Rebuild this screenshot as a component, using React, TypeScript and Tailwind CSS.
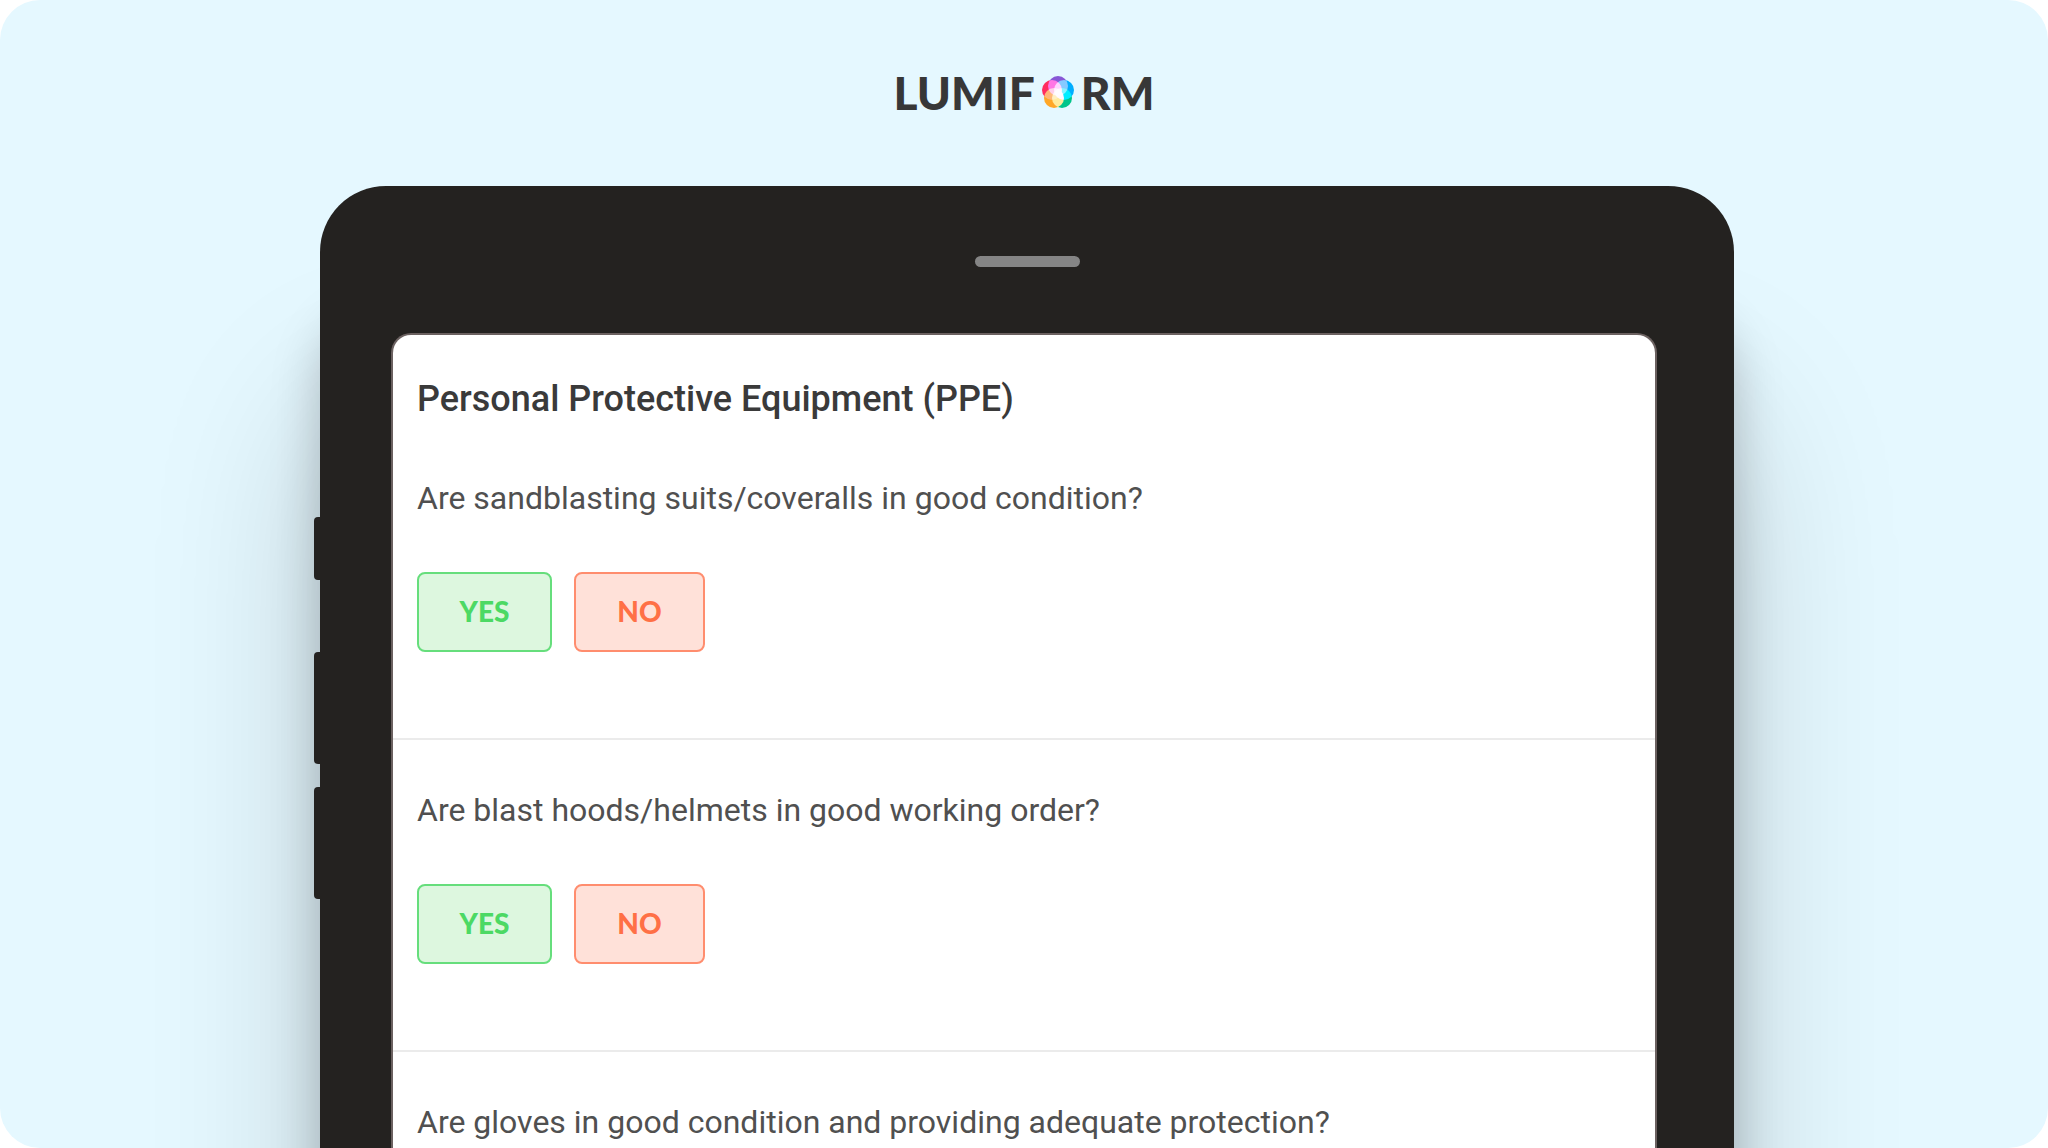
const questions = [
  { text: 'Are sandblasting suits/coveralls in good condition?', open: true },
  { text: 'Are blast hoods/helmets in good working order?', open: true },
  { text: 'Are gloves in good condition and providing adequate protection?', open: false },
];

// Five overlapping petals, the overlaps brighten towards white in the middle.
const petals = [
  { cx: 16, cy: 10, fill: '#8757d6' },
  { cx: 22, cy: 14, fill: '#00aeff' },
  { cx: 20, cy: 22, fill: '#00c58a' },
  { cx: 12, cy: 22, fill: '#ffa726' },
  { cx: 10, cy: 14, fill: '#ff2d5f' },
];

function LogoMark() {
  return (
    <svg viewBox="0 0 32 32" className="mx-[7px] size-8 isolate" aria-hidden="true">
      {petals.map((petal) => (
        <circle key={petal.fill} cx={petal.cx} cy={petal.cy} r="10" fill={petal.fill} className="mix-blend-screen" />
      ))}
    </svg>
  );
}

function Question({ text, open }: { text: string; open: boolean }) {
  return (
    <fieldset className="border-b-2 border-[#ebebeb] px-6 pt-[50px] pb-[86px] last:border-b-0 last:pb-0">
      <legend className="float-left w-full text-[32px] leading-10 text-[#505050]">{text}</legend>
      {open && (
        <div className="clear-both flex gap-[22px] pt-[54px] font-['Lato',sans-serif] text-[28px] font-black">
          <button
            type="button"
            className="h-20 w-[135px] rounded-lg border-2 border-[#66de7c] bg-[#ddf7df] pb-0.5 text-[#4cd964]"
          >
            YES
          </button>
          <button
            type="button"
            className="h-20 w-[131px] rounded-lg border-2 border-[#ff8d6e] bg-[#ffe1d9] pb-0.5 text-[#ff7046]"
          >
            NO
          </button>
        </div>
      )}
    </fieldset>
  );
}

export default function App() {
  return (
    <div className="flex h-screen flex-col overflow-hidden rounded-[40px] bg-[#e5f8ff] font-['Roboto',sans-serif]">
      <header className="flex h-[186px] shrink-0 items-center justify-center pb-0.5 font-['Lato',sans-serif] text-[46px] font-black text-[#373737]">
        <span>LUMIF</span>
        <LogoMark />
        <span>RM</span>
      </header>

      <main className="flex min-h-0 flex-1 pr-[314px] pl-80">
        <div className="relative flex flex-1 flex-col rounded-t-[66px] bg-[#242220] shadow-[0_220px_170px_rgba(0,0,0,0.18),0_130px_50px_rgba(0,0,0,0.22)]">
          <div className="absolute top-[331px] -left-1.5 h-[63px] w-2 rounded-l-sm bg-[#242220]" />
          <div className="absolute top-[466px] -left-1.5 h-28 w-2 rounded-l-sm bg-[#242220]" />
          <div className="absolute top-[601px] -left-1.5 h-28 w-2 rounded-l-sm bg-[#242220]" />

          <div className="flex h-[147px] shrink-0 items-center justify-center pt-1">
            <div className="h-[11px] w-[105px] rounded-full bg-[#858585]" />
          </div>

          <section className="mr-[77px] ml-[71px] min-h-0 flex-1 overflow-hidden rounded-t-[20px] border-2 border-b-0 border-[#6b6160] bg-white pt-10">
            <h1 className="mb-[5px] px-6 text-4xl leading-[48px] font-medium text-[#3a3a3a]">
              Personal Protective Equipment (PPE)
            </h1>
            {questions.map((question) => (
              <Question key={question.text} text={question.text} open={question.open} />
            ))}
          </section>
        </div>
      </main>
    </div>
  );
}
